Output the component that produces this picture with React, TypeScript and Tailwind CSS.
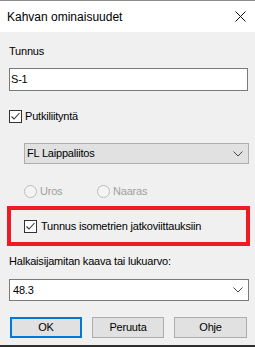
import React from 'react';

const Check = () => (
  <svg width="11" height="11" viewBox="0 0 11 11" className="block">
    <polyline points="1.5,5.5 4,8 9.5,2" fill="none" stroke="#333" strokeWidth="1.1" />
  </svg>
);

const CheckBox = () => (
  <div className="w-[13px] h-[13px] border border-[#333333] bg-white flex items-center justify-center shrink-0">
    <Check />
  </div>
);

const Radio = ({ label, className = '' }: { label: string; className?: string }) => (
  <div className={`flex items-center gap-[3px] ${className}`}>
    <div className="w-[13px] h-[13px] rounded-full border border-[#bcbcbc] bg-[#f4f4f4] shrink-0" />
    <span className="text-[#a0a0a0] leading-[13px]">{label}</span>
  </div>
);

const Chevron = () => (
  <svg width="10" height="6" viewBox="0 0 10 6" className="block">
    <polyline points="0.5,0.5 5,5 9.5,0.5" fill="none" stroke="#444" strokeWidth="1" />
  </svg>
);

export default function App() {
  return (
    <div className="w-[255px] h-[347px] overflow-hidden bg-[#f0f0f0] flex flex-col font-['Liberation_Sans',Arial,sans-serif] text-black border-t border-[#8a8a8a] border-b-2 border-b-[#2e2e2e]">
      <div className="h-[31px] bg-white flex items-center justify-between pl-[7px] pr-[8px] shrink-0 text-[12px]">
        <span className="leading-[14px] pt-[1px]">Kahvan ominaisuudet</span>
        <svg width="11" height="11" viewBox="0 0 11 11" className="block mr-[1px]">
          <path d="M0.5 0.5 L10.5 10.5 M10.5 0.5 L0.5 10.5" stroke="#111" strokeWidth="1" fill="none" />
        </svg>
      </div>

      <div className="flex flex-col pl-[9px] text-[11px] tracking-[-0.2px]">
        <div className="mt-[12px] h-[14px] leading-[14px]">Tunnus</div>

        <div className="mt-[10px] w-[239px] h-[23px] border border-[#7a7a7a] bg-white flex items-center pl-[1px]">
          S-1
        </div>

        <div className="mt-[19px] h-[13px] flex items-center gap-[3px]">
          <CheckBox />
          <span className="leading-[13px]">Putkiliityntä</span>
        </div>

        <div className="mt-[20px] ml-[15px] w-[225px] h-[21px] border border-[#adadad] bg-[#e1e1e1] flex items-center justify-between pl-[2px] pr-[5px]">
          <span>FL Laippaliitos</span>
          <Chevron />
        </div>

        <div className="mt-[21px] ml-[15px] h-[13px] flex items-center">
          <Radio label="Uros" className="w-[73px]" />
          <Radio label="Naaras" />
        </div>

        <div className="mt-[8px] ml-[-2px] w-[243px] h-[40px] border-4 border-[#ed1c24] flex items-center pl-[13px]">
          <div className="flex items-center gap-[4px]">
            <CheckBox />
            <span className="leading-[13px]">Tunnus isometrien jatkoviittauksiin</span>
          </div>
        </div>

        <div className="mt-[8px] h-[14px] leading-[14px]">Halkaisijamitan kaava tai lukuarvo:</div>

        <div className="mt-[11px] w-[240px] h-[22px] border border-[#7a7a7a] bg-white flex items-center justify-between pl-[3px] pr-[5px]">
          <span>48.3</span>
          <Chevron />
        </div>

        <div className="mt-[16px] ml-[1px] flex gap-[10px]">
          <button className="w-[72px] h-[21px] border-2 border-[#0078d7] bg-[#e1e1e1] flex items-center justify-center">OK</button>
          <button className="w-[72px] h-[21px] border border-[#adadad] bg-[#e1e1e1] flex items-center justify-center">Peruuta</button>
          <button className="w-[73px] h-[21px] border border-[#adadad] bg-[#e1e1e1] flex items-center justify-center">Ohje</button>
        </div>
      </div>
    </div>
  );
}
